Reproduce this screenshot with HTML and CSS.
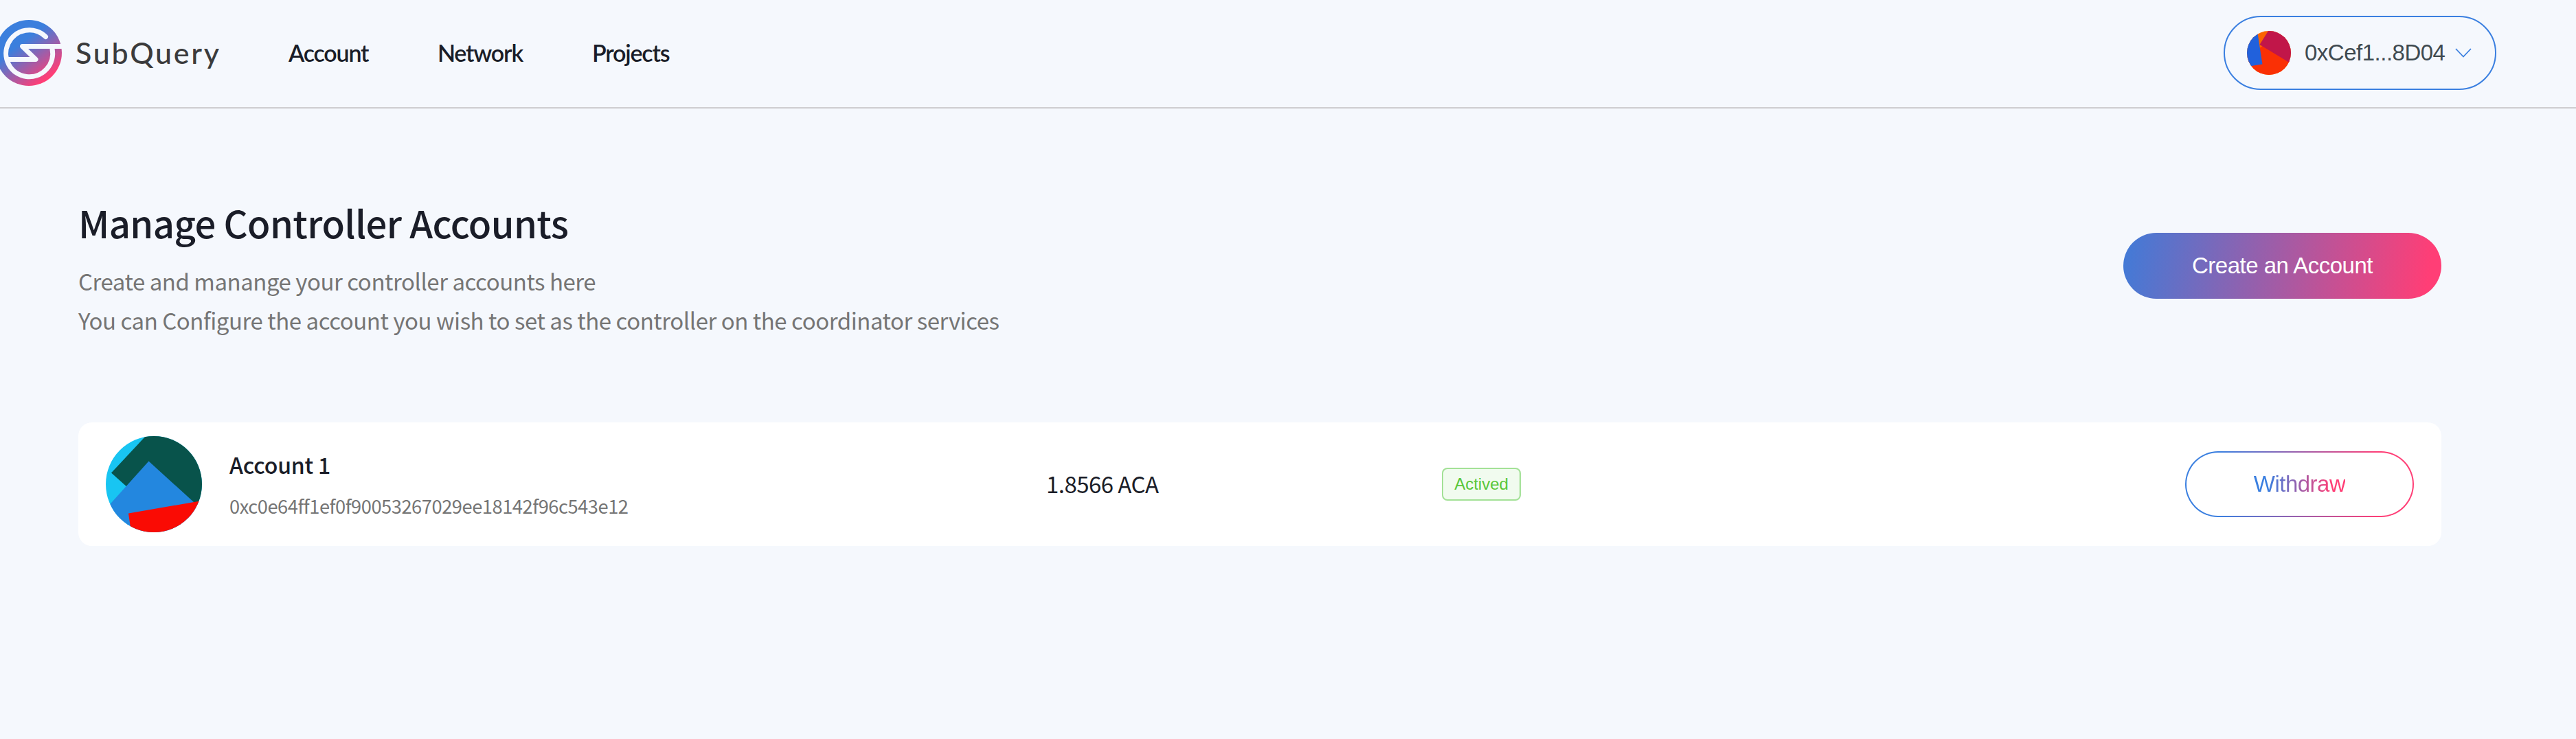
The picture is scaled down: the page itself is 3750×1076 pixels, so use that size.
FILE: index.html
```html
<!DOCTYPE html>
<html lang="en">
<head>
<meta charset="utf-8">
<title>SubQuery</title>
<link rel="stylesheet" href="styles.css">
</head>
<body>
<header class="header">
  <a class="brand">
    <svg class="brand-mark" width="90" height="96" viewBox="0 0 90 96">
      <defs>
        <linearGradient id="brand" gradientUnits="userSpaceOnUse" x1="12" y1="14" x2="66" y2="86">
          <stop offset="0.3" stop-color="#3b7fdd"/>
          <stop offset="1" stop-color="#ff3e76"/>
        </linearGradient>
      </defs>
      <circle cx="42" cy="48" r="48" fill="url(#brand)"/>
      <g fill="none" stroke="#f5f8fd" stroke-width="7" stroke-linecap="round" stroke-linejoin="round">
        <path d="M66.500 24.500A34 34 0 1 0 76 42"/>
        <path d="M92 38.500H32.500L52 57.500H12" />
      </g>
    </svg>
    <span class="brand-name">SubQuery</span>
  </a>
  <nav class="nav">
    <a class="nav-account">Account</a>
    <a class="nav-network">Network</a>
    <a class="nav-projects">Projects</a>
  </nav>
  <button class="wallet">
    <svg width="64" height="64" viewBox="0 0 64 64">
      <clipPath id="walletClip"><circle cx="32" cy="32" r="32"/></clipPath>
      <g clip-path="url(#walletClip)">
        <rect width="64" height="64" fill="#fb6400"/>
        <path d="M0 38L24 21L64 46V64H0Z" fill="#fa3005"/>
        <path d="M31 0L18.500 20L64 47.500V0Z" fill="#c11649"/>
        <path d="M0 0H15L22.500 48.500L0 52Z" fill="#2161dc"/>
      </g>
    </svg>
    <span class="wallet-address">0xCef1...8D04</span>
    <svg width="24" height="14" viewBox="0 0 24 14" fill="none" stroke="#3a7fe0" stroke-width="1.800"><path d="M1 1L12 12.500L23 1"/></svg>
  </button>
</header>
<main class="main">
  <section class="intro">
    <div>
      <h1 class="title">Manage Controller Accounts</h1>
      <p class="lead">Create and manange your controller accounts here</p>
      <p class="lead">You can Configure the account you wish to set as the controller on the coordinator services</p>
    </div>
    <button class="create">Create an Account</button>
  </section>
  <section class="card">
    <svg width="140" height="140" viewBox="0 0 140 140">
      <clipPath id="cardClip"><circle cx="70" cy="70" r="70"/></clipPath>
      <g clip-path="url(#cardClip)">
        <rect width="140" height="140" fill="#18c5f2"/>
        <path d="M58 0L8 53.500L60 100H140V0Z" fill="#08534b"/>
        <path d="M62.500 36.500L0 106V140H140V107Z" fill="#2387df"/>
        <path d="M33 112.500L140 94V140H37Z" fill="#fa0b04"/>
      </g>
    </svg>
    <div class="account">
      <div class="account-name">Account 1</div>
      <div class="account-address">0xc0e64ff1ef0f90053267029ee18142f96c543e12</div>
    </div>
    <div class="balance">1.8566 ACA</div>
    <div class="status"><span class="tag">Actived</span></div>
    <button class="withdraw"><span>Withdraw</span></button>
  </section>
</main>
</body>
</html>
```
FILE: styles.css
```css
* { box-sizing: border-box; }
body {
  margin: 0;
  min-height: 1076px;
  background: #f5f8fd;
  color: #1a1d28;
  font-family: "Noto Sans CJK SC", sans-serif;
}
button {
  font-family: "Liberation Sans", Arial, sans-serif;
  font-size: 33px;
  letter-spacing: -0.5px;
  padding: 0;
}
svg { display: block; flex: none; }
.header {
  display: flex;
  align-items: center;
  height: 158px;
  padding: 0 116px 2px 0;
  border-bottom: 2px solid #cecdd0;
}
.brand { display: flex; align-items: center; width: 420px; }
.brand-name {
  margin-left: 20px;
  font: 500 43px/60px Lato, sans-serif;
  letter-spacing: 2.7px;
  color: #3b3b3c;
}
.nav { display: flex; font: 600 34px/50px Lato, sans-serif; letter-spacing: -1.2px; }
.nav-account { width: 217px; }
.nav-network { width: 225px; }
.wallet {
  display: flex;
  align-items: center;
  width: 397px;
  height: 108px;
  margin-left: auto;
  padding-left: 32px;
  border: 2px solid #3a7fe0;
  border-radius: 54px;
  background: transparent;
  color: #3f4a50;
}
.wallet-address { width: 204px; margin: 0 15px 0 20px; white-space: nowrap; text-align: left; }
.main { padding: 129px 196px 0 114px; }
.intro { display: flex; align-items: flex-start; justify-content: space-between; height: 328px; }
.title { margin: -3px 0 17px; font-size: 54.5px; line-height: 80px; font-weight: 500; letter-spacing: -0.6px; }
.lead { margin: 0; font-size: 33px; line-height: 57px; letter-spacing: -0.47px; color: #757575; }
.create {
  width: 463px;
  height: 96px;
  margin-top: 52px;
  border: 0;
  border-radius: 48px;
  background: linear-gradient(100deg, #407bd8 0%, #ff3e76 95%);
  color: #fff;
}
.card {
  display: flex;
  align-items: center;
  height: 180px;
  padding: 0 40px;
  border-radius: 20px;
  background: #fff;
}
.account { width: 1189px; margin-left: 40px; }
.account-name { font-size: 32px; line-height: 48px; font-weight: 500; margin-bottom: 14px; letter-spacing: -0.2px; }
.account-address { font-size: 27.3px; line-height: 44px; letter-spacing: -0.47px; color: #757575; }
.balance { width: 576px; font-size: 33px; line-height: 48px; letter-spacing: -0.55px; padding-bottom: 2px; }
.tag {
  display: block;
  width: 115px;
  height: 48px;
  border: 2px solid #a3e197;
  border-radius: 8px;
  background: #f1fbef;
  color: #5ac73a;
  font: 24px/44px "Liberation Sans", Arial, sans-serif;
  text-align: center;
}
.withdraw {
  width: 333px;
  height: 96px;
  margin-left: auto;
  border: 2px solid transparent;
  border-radius: 48px;
  background: linear-gradient(#fff, #fff) padding-box, linear-gradient(90deg, #3a7fe0 15%, #ff3e76 85%) border-box;
}
.withdraw span {
  background: linear-gradient(90deg, #3a7fe0 15%, #ff3e76 85%);
  -webkit-background-clip: text;
  background-clip: text;
  color: transparent;
}
```
